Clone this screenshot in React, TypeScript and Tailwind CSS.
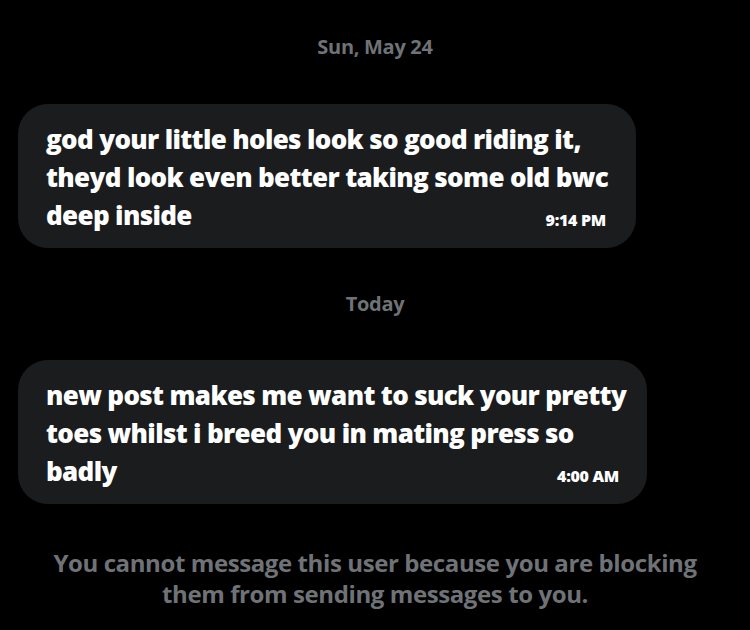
function Bubble({ lines, time, width, pr }: { lines: string[]; time: string; width: string; pr: string }) {
  const last = lines[lines.length - 1];
  return (
    <div className={`ml-[18px] ${width} rounded-[30px] bg-[#1b1c1e] pl-[28px] ${pr} pt-[16px] pb-[14px]`}>
      <div className="text-[26px] leading-[38px] font-extrabold text-white tracking-[-0.65px] whitespace-nowrap">
        {lines.slice(0, -1).map((l, i) => (
          <div key={i}>{l}</div>
        ))}
        <div className="flex justify-between items-end">
          <span>{last}</span>
          <span className="text-[16px] leading-[22px] font-extrabold tracking-[-0.3px] mb-[3px]">{time}</span>
        </div>
      </div>
    </div>
  );
}

export default function App() {
  const font = { fontFamily: '"Open Sans", "Noto Sans", sans-serif' };
  return (
    <div className="w-[750px] h-[630px] bg-black overflow-hidden" style={font}>
      <div className="flex flex-col">
        <div className="pt-[34px] text-center text-[20px] leading-[26px] font-bold text-[#6f7377] tracking-[-0.3px]">
          Sun, May 24
        </div>
        <div className="mt-[44px]">
          <Bubble
            width="w-[618px]"
            pr="pr-[30px]"
            lines={["god your little holes look so good riding it,", "theyd look even better taking some old bwc", "deep inside"]}
            time="9:14 PM"
          />
        </div>
        <div className="mt-[43px] text-center text-[20px] leading-[26px] font-bold text-[#6f7377] tracking-[-0.3px]">
          Today
        </div>
        <div className="mt-[43px]">
          <Bubble
            width="w-[629px]"
            pr="pr-[28px]"
            lines={["new post makes me want to suck your pretty", "toes whilst i breed you in mating press so", "badly"]}
            time="4:00 AM"
          />
        </div>
        <div className="mt-[43px] px-[20px] text-center text-[24px] leading-[31px] font-bold text-[#6f7377] tracking-[-0.4px] whitespace-nowrap">
          You cannot message this user because you are blocking
          <br />
          them from sending messages to you.
        </div>
      </div>
    </div>
  );
}
